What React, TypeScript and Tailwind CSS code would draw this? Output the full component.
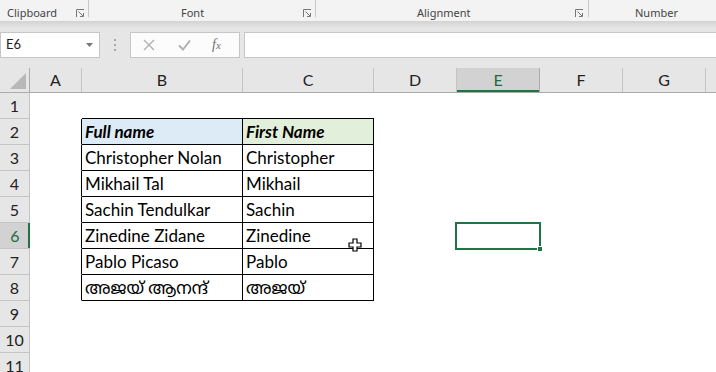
import React from "react";

const cols = [
  { k: "A", w: 52 },
  { k: "B", w: 161 },
  { k: "C", w: 131 },
  { k: "D", w: 83 },
  { k: "E", w: 83 },
  { k: "F", w: 83 },
  { k: "G", w: 83 },
  { k: "", w: 60 },
];

const data: Record<number, [string, string]> = {
  2: ["Full name", "First Name"],
  3: ["Christopher Nolan", "Christopher"],
  4: ["Mikhail Tal", "Mikhail"],
  5: ["Sachin Tendulkar", "Sachin"],
  6: ["Zinedine Zidane", "Zinedine"],
  7: ["Pablo Picaso", "Pablo"],
  8: ["അജയ് ആനന്ദ്", "അജയ്"],
};

function Launcher() {
  return (
    <svg width="9" height="9" viewBox="0 0 9 9" className="shrink-0">
      <path d="M0.5 8 V0.5 H8" fill="none" stroke="#777" strokeWidth="1" />
      <path d="M2.5 2.5 L7 7" stroke="#777" strokeWidth="1" />
      <path d="M4 7.5 H7.5 V4" fill="none" stroke="#777" strokeWidth="1" />
    </svg>
  );
}

const sheetFont = { fontFamily: "Lato, 'Noto Sans', 'Noto Sans Malayalam', sans-serif" };

export default function App() {
  const rows = Array.from({ length: 11 }, (_, i) => i + 1);
  return (
    <div
      className="relative w-[716px] h-[372px] overflow-hidden bg-white"
      style={{ fontFamily: "'Noto Sans', sans-serif" }}
    >
      {/* Ribbon group labels */}
      <div className="flex h-[21px] items-start bg-[#f3f3f3] text-[11px] text-[#444] leading-none">
        <div className="flex h-[19px] w-[88px] shrink-0 items-end justify-between pb-[1px] pl-[7px] pr-[3px]">
          <span>Clipboard</span>
          <Launcher />
        </div>
        <div className="h-[17px] w-px shrink-0 bg-[#c8c8c8]" />
        <div className="flex h-[19px] w-[226px] shrink-0 items-end pb-[1px] pr-[3px]">
          <span className="ml-[92px]">Font</span>
          <span className="ml-auto">
            <Launcher />
          </span>
        </div>
        <div className="h-[17px] w-px shrink-0 bg-[#c8c8c8]" />
        <div className="flex h-[19px] w-[272px] shrink-0 items-end pb-[1px] pr-[4px]">
          <span className="ml-[101px]">Alignment</span>
          <span className="ml-auto">
            <Launcher />
          </span>
        </div>
        <div className="h-[17px] w-px shrink-0 bg-[#c8c8c8]" />
        <div className="flex h-[19px] flex-1 items-end pb-[1px]">
          <span className="ml-[46px]">Number</span>
        </div>
      </div>
      {/* shadow */}
      <div className="h-[7px] bg-gradient-to-b from-[#d2d2d2] to-[#e6e6e6]" />
      {/* formula bar */}
      <div className="flex h-[40px] bg-[#e6e6e6] pt-[4px]">
        <div className="flex h-[26px] w-[100px] shrink-0 items-center justify-between border border-[#c6c6c6] bg-white pl-[5px] pr-[6px]">
          <span className="text-[13px] text-[#222]" style={sheetFont}>E6</span>
          <svg width="7" height="4" viewBox="0 0 7 4">
            <path d="M0 0 H7 L3.5 4 Z" fill="#777" />
          </svg>
        </div>
        <div className="flex w-[30px] shrink-0 flex-col items-center justify-center gap-[3px] h-[26px]">
          <span className="block h-[2px] w-[2px] bg-[#a8a8a8]" />
          <span className="block h-[2px] w-[2px] bg-[#a8a8a8]" />
          <span className="block h-[2px] w-[2px] bg-[#a8a8a8]" />
        </div>
        <div className="flex h-[26px] w-[110px] shrink-0 items-center border border-[#c6c6c6] bg-[#fcfcfc]">
          <svg width="12" height="12" viewBox="0 0 12 12" className="ml-[12px]">
            <path d="M1 1 L11 11 M11 1 L1 11" stroke="#b0b0b0" strokeWidth="1.4" />
          </svg>
          <svg width="13" height="12" viewBox="0 0 13 12" className="ml-[23px]">
            <path d="M1 6.5 L5 10.5 L12 1.5" fill="none" stroke="#b0b0b0" strokeWidth="2" />
          </svg>
          <span
            className="ml-[21px] text-[14px] italic text-[#707070] leading-none"
            style={{ fontFamily: "'Liberation Serif', serif" }}
          >
            f<span className="text-[11px]">x</span>
          </span>
        </div>
        <div className="ml-[4px] h-[26px] flex-1 border border-r-0 border-[#c6c6c6] bg-white" />
      </div>
      {/* column headers */}
      <div className="flex h-[25px] bg-[#e6e6e6] border-b border-[#ababab]" style={sheetFont}>
        <div className="relative w-[30px] shrink-0 border-r border-[#ababab]">
          <svg width="20" height="20" viewBox="0 0 20 20" className="absolute right-[2px] bottom-[2px]">
            <path d="M19 3 V19 H3 Z" fill="#b8b8b8" />
          </svg>
        </div>
        {cols.map((c, i) =>
          c.k === "E" ? (
            <div
              key={i}
              className="flex shrink-0 items-center justify-center border-r border-[#ababab] bg-[#d2d2d2] text-[16px] text-[#1d6b3f] shadow-[inset_0_-2px_0_#217346]"
              style={{ width: c.w }}
            >
              {c.k}
            </div>
          ) : (
            <div
              key={i}
              className="flex shrink-0 items-center justify-center border-r border-[#c4c4c4] text-[16px] text-[#222]"
              style={{ width: c.w }}
            >
              {c.k}
            </div>
          )
        )}
      </div>
      {/* rows */}
      <div className="relative" style={sheetFont}>
        {rows.map((r) => {
          const d = data[r];
          return (
            <div key={r} className="flex h-[26px]">
              <div
                className={
                  r === 6
                    ? "flex w-[30px] shrink-0 items-center justify-center border-b border-[#c4c4c4] bg-[#d2d2d2] text-[16px] text-[#1d6b3f] shadow-[inset_-2px_0_0_#217346]"
                    : "flex w-[30px] shrink-0 items-center justify-center border-b border-r border-[#c4c4c4] bg-[#e6e6e6] text-[16px] text-[#222]"
                }
              >
                {r}
              </div>
              {cols.map((c, i) => {
                const inTable = r >= 2 && r <= 8;
                let cls = "shrink-0 border-b border-r border-transparent";
                if (c.k === "A" && inTable) cls = "shrink-0 border-r border-black border-b border-b-transparent";
                if ((c.k === "B" || c.k === "C") && r === 1) cls = "shrink-0 border-b border-black";
                if ((c.k === "B" || c.k === "C") && inTable) {
                  cls =
                    "flex shrink-0 items-end overflow-hidden whitespace-nowrap border-b border-r border-black pb-[1px] pl-[3px] text-[17px] text-black leading-[22px]";
                  if (r === 2) cls += c.k === "B" ? " bg-[#ddebf7] font-bold italic" : " bg-[#e2efda] font-bold italic";
                }
                const text = d && c.k === "B" ? d[0] : d && c.k === "C" ? d[1] : "";
                return (
                  <div key={i} className={cls} style={{ width: c.w }}>
                    {text}
                  </div>
                );
              })}
            </div>
          );
        })}
        {/* selection E6 */}
        <div className="absolute left-[455px] top-[129px] h-[28px] w-[86px] border-2 border-[#217346]" />
        <div className="absolute left-[537px] top-[153px] h-[6px] w-[6px] border border-white bg-[#217346]" />
        {/* cursor */}
        <svg width="14" height="14" viewBox="0 0 14 14" className="absolute left-[348px] top-[145px]">
          <path d="M5 1 H9 V5 H13 V9 H9 V13 H5 V9 H1 V5 H5 Z" fill="white" stroke="black" strokeWidth="1.2" />
        </svg>
      </div>
    </div>
  );
}
